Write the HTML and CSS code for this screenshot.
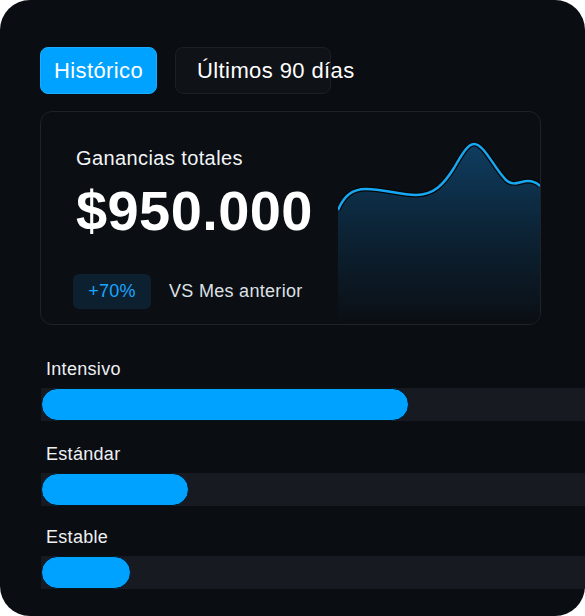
FILE: index.html
```html
<!DOCTYPE html>
<html lang="es">
	<head>
		<meta charset="UTF-8">
		<title>Ganancias</title>
		<link rel="stylesheet" href="styles.css">
	</head>
	<body>
		<div class="panel">
			<div class="tabs">
				<a href="#" class="tab tab-active">Histórico</a>
				<a href="#" class="tab">Últimos 90 días</a>
			</div>

			<div class="card">
				<div class="card-info">
					<p class="card-title">Ganancias totales</p>
					<p class="card-amount">$950.000</p>
					<div class="card-foot">
						<span class="badge">+70%</span>
						<span class="compare">VS Mes anterior</span>
					</div>
				</div>
				<svg class="chart" width="202" height="185" viewBox="0 0 202 185">
					<defs>
						<linearGradient id="area" x1="0" y1="0" x2="0" y2="1">
							<stop offset="0" stop-color="#0f3d61"/>
							<stop offset="0.45" stop-color="#0c2538"/>
							<stop offset="1" stop-color="#0b0e13"/>
						</linearGradient>
					</defs>
					<path d="M0,70 C6,56 14,49 28,49 C45,49 62,55 78,55 C96,55 106,44 116,28 C124,14 130,4 136,4 C146,4 156,28 168,40 C176,47 182,41 190,41 C196,41 200,44 202,46 L202,185 L0,185 Z" fill="url(#area)"/>
					<path d="M0,70 C6,56 14,49 28,49 C45,49 62,55 78,55 C96,55 106,44 116,28 C124,14 130,4 136,4 C146,4 156,28 168,40 C176,47 182,41 190,41 C196,41 200,44 202,46" fill="none" stroke="#050709" stroke-width="5"/>
					<path d="M0,70 C6,56 14,49 28,49 C45,49 62,55 78,55 C96,55 106,44 116,28 C124,14 130,4 136,4 C146,4 156,28 168,40 C176,47 182,41 190,41 C196,41 200,44 202,46" fill="none" stroke="#16a8f2" stroke-width="2.5"/>
				</svg>
			</div>

			<ul class="levels">
				<li>
					<p class="level-name">Intensivo</p>
					<div class="track"><div class="fill" style="width: 368px"></div></div>
				</li>
				<li>
					<p class="level-name">Estándar</p>
					<div class="track"><div class="fill" style="width: 148px"></div></div>
				</li>
				<li>
					<p class="level-name">Estable</p>
					<div class="track"><div class="fill" style="width: 90px"></div></div>
				</li>
			</ul>
		</div>
	</body>
</html>
```

FILE: styles.css
```css
*{
	margin: 0;
	padding: 0;
	box-sizing: border-box;
}
body{
	background: #fff;
	font-family: "Liberation Sans", Arial, sans-serif;
}
a{
	text-decoration: none;
}
ul{
	list-style: none;
}

.panel{
	width: 585px;
	height: 616px;
	border-radius: 30px;
	background: #0a0d12;
	overflow: hidden;
	padding: 47px 0 0 40px;
	color: #fff;
}

/* tabs */
.tabs{
	display: flex;
	gap: 18px;
}
.tab{
	display: block;
	height: 47px;
	line-height: 45px;
	border-radius: 8px;
	font-size: 22px;
	letter-spacing: 0.4px;
	color: #fff;
	white-space: nowrap;
}
.tab-active{
	width: 117px;
	text-align: center;
	background: #00a2ff;
	border: 1px solid #19adff;
}
.tab:not(.tab-active){
	width: 156px;
	padding-left: 21px;
	background: #0f1217;
	border: 1px solid #1c2026;
}

/* card */
.card{
	margin-top: 17px;
	width: 501px;
	height: 214px;
	border: 1px solid #1f2329;
	border-radius: 12px;
	background: #0b0e13;
	display: flex;
	overflow: hidden;
}
.card-info{
	flex: 1;
	padding: 34px 0 0 35px;
}
.card-title{
	font-size: 20px;
	line-height: 24px;
	letter-spacing: 0.4px;
	color: #f2f4f6;
}
.card-amount{
	margin-top: 9px;
	font-size: 56px;
	line-height: 64px;
	font-weight: bold;
	letter-spacing: 0.4px;
}
.card-foot{
	margin-top: 31px;
	display: flex;
	align-items: center;
	gap: 18px;
	margin-left: -3px;
}
.badge{
	width: 78px;
	height: 35px;
	line-height: 35px;
	text-align: center;
	border-radius: 6px;
	background: #0c2030;
	color: #1aa5ff;
	font-size: 18px;
	letter-spacing: 0.3px;
}
.compare{
	font-size: 18px;
	letter-spacing: 0.3px;
	color: #dde1e6;
}
.chart{
	align-self: flex-end;
	flex: none;
	display: block;
	margin-bottom: -1px;
}

/* levels */
.levels{
	margin-top: 33px;
}
.levels li:nth-child(2){
	margin-top: 22px;
}
.levels li:nth-child(3){
	margin-top: 20px;
}
.level-name{
	padding-left: 6px;
	font-size: 18px;
	line-height: 22px;
	letter-spacing: 0.3px;
	color: #eef0f2;
	margin-bottom: 8px;
}
.track{
	width: 560px;
	height: 33px;
	margin-left: 1px;
	background: #171a20;
}
.fill{
	height: 33px;
	border-radius: 17px;
	background: #00a2ff;
	border: 1px solid #06121c;
}
```
